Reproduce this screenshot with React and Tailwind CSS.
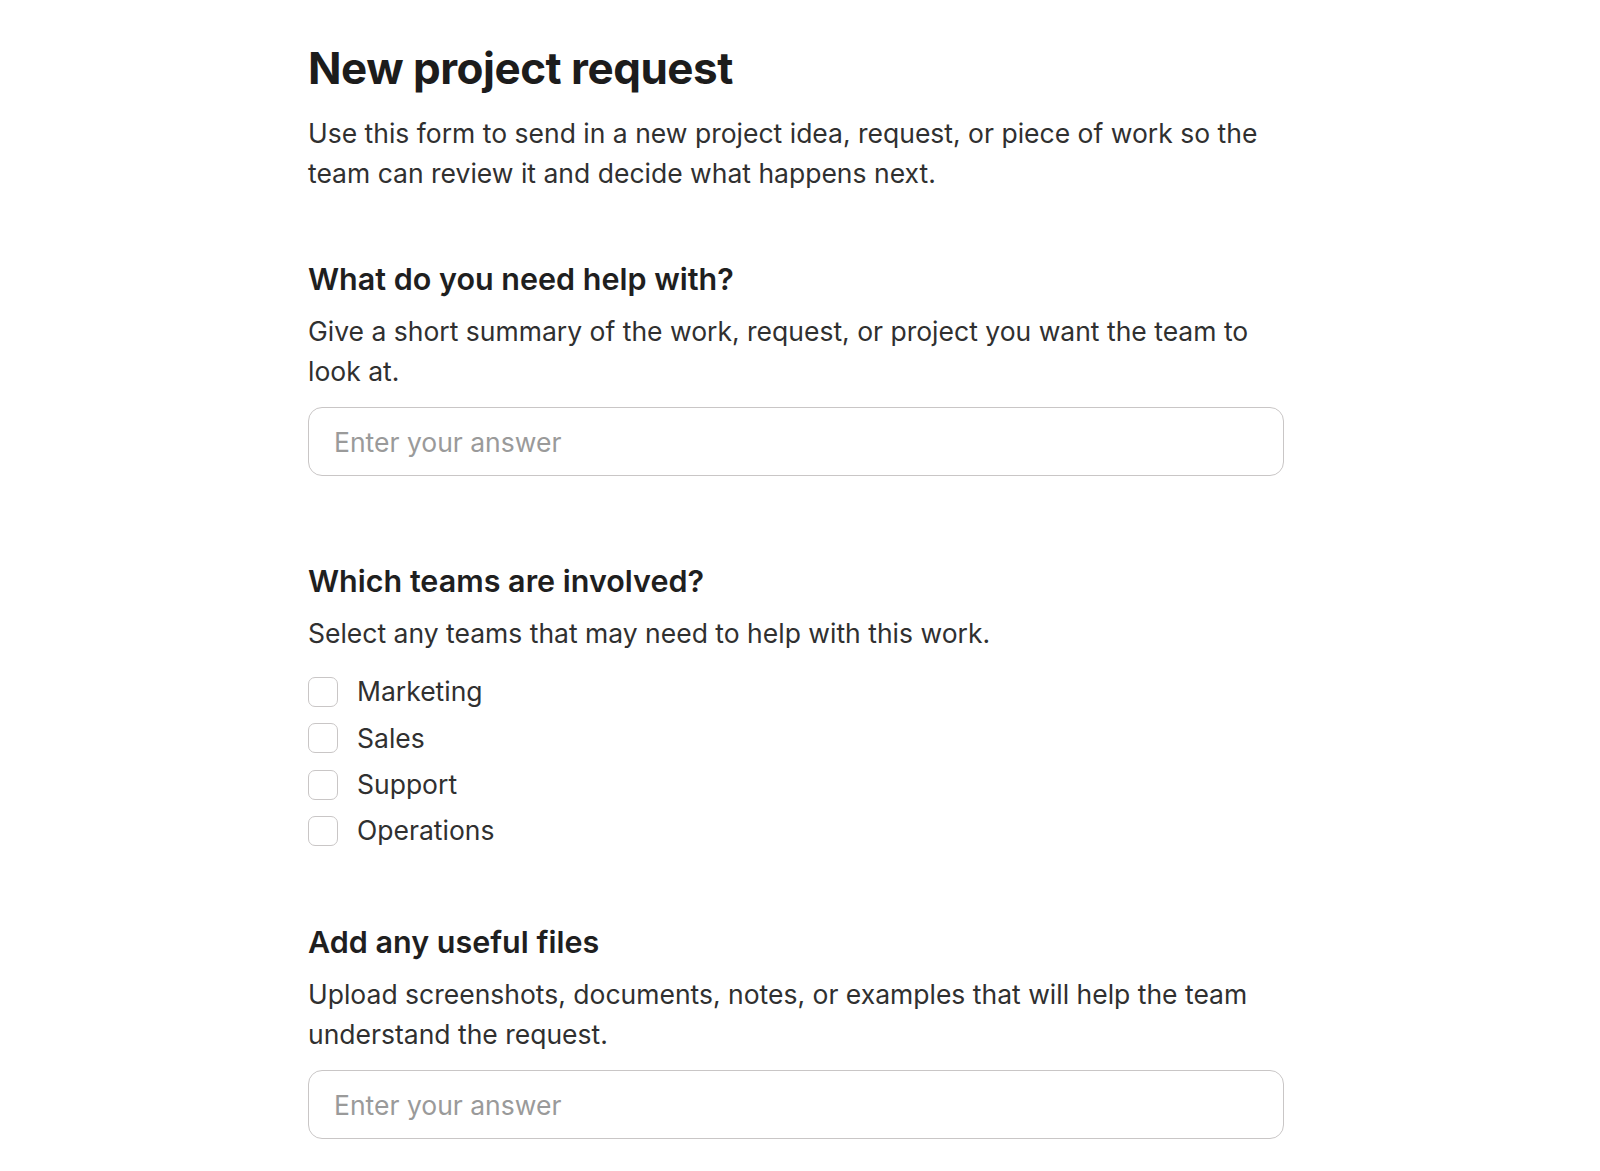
import { useState } from 'react';

const teams = ['Marketing', 'Sales', 'Support', 'Operations'];

function Question({ title, hint, className = '', children }) {
  return (
    <section className={className}>
      <h2 className="text-[30.5px] leading-[34px] font-semibold text-[#1f1f1f]">{title}</h2>
      <p className="mt-[15px] text-[26.5px] leading-[40px] text-[#303030]">{hint}</p>
      {children}
    </section>
  );
}

function AnswerInput() {
  return (
    <input
      type="text"
      placeholder="Enter your answer"
      className="mt-[16px] block w-full h-[69px] rounded-[14px] border-[1.5px] border-[#c9c6c6] bg-white px-[25px] text-[26.5px] text-[#303030] placeholder:text-[#9a9a9a] outline-none"
    />
  );
}

export default function App() {
  const [checked, setChecked] = useState({});

  return (
    <div className="min-h-screen bg-white" style={{ fontFamily: 'Inter, "Noto Sans", sans-serif' }}>
      <div className="w-[976px] ml-[308px] pt-[42px] pb-12">
        <h1 className="text-[44px] leading-[52px] font-bold text-[#1c1c1c] tracking-[-0.5px]">New project request</h1>
        <p className="mt-[19px] text-[26.5px] leading-[40px] text-[#303030]">
          Use this form to send in a new project idea, request, or piece of work so the team can review it and decide what happens next.
        </p>

        <Question
          className="mt-[69px]"
          title="What do you need help with?"
          hint="Give a short summary of the work, request, or project you want the team to look at."
        >
          <AnswerInput />
        </Question>

        <Question
          className="mt-[88px]"
          title="Which teams are involved?"
          hint="Select any teams that may need to help with this work."
        >
          <div className="mt-[16px] flex flex-col">
            {teams.map(team => (
              <label key={team} className="flex items-center h-[46.3px] gap-[19px] cursor-pointer">
                <input
                  type="checkbox"
                  checked={!!checked[team]}
                  onChange={() => setChecked({ ...checked, [team]: !checked[team] })}
                  className="appearance-none w-[30px] h-[30px] rounded-[7px] border-[1.5px] border-[#c9c6c6] bg-white checked:bg-[#303030]"
                />
                <span className="text-[26.5px] text-[#303030]">{team}</span>
              </label>
            ))}
          </div>
        </Question>

        <Question
          className="mt-[71px]"
          title="Add any useful files"
          hint="Upload screenshots, documents, notes, or examples that will help the team understand the request."
        >
          <AnswerInput />
        </Question>
      </div>
    </div>
  );
}
